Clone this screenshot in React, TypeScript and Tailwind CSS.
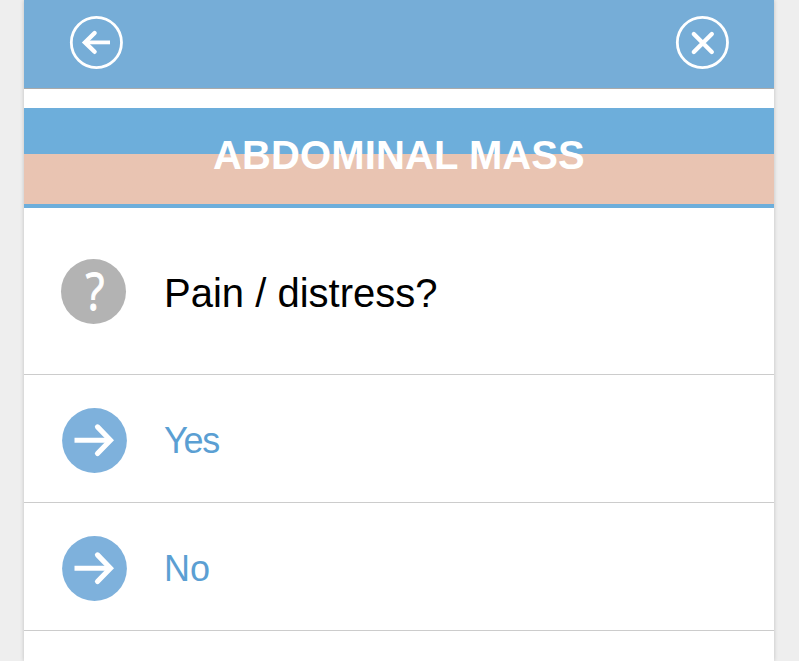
import type { ReactNode } from "react";

const sans = "font-['Liberation_Sans',Arial,sans-serif]";

function BackIcon() {
  return (
    <svg width="54" height="54" viewBox="0 0 54 54" fill="none" stroke="white">
      <circle cx="27.4" cy="27.5" r="25.1" strokeWidth="2.8" />
      <path d="M41 27.4H18" strokeWidth="3.8" />
      <path d="M25.6 18L16 27.4L25.6 36.8" strokeWidth="4.4" strokeLinecap="round" />
    </svg>
  );
}

function CloseIcon() {
  return (
    <svg width="54" height="54" viewBox="0 0 54 54" fill="none" stroke="white">
      <circle cx="27.4" cy="27.5" r="25.1" strokeWidth="2.8" />
      <path d="M18.8 19L36.8 37M36.8 19L18.8 37" strokeWidth="4.3" strokeLinecap="round" />
    </svg>
  );
}

function QuestionIcon() {
  return (
    <span className="flex size-[65px] items-center justify-center rounded-full bg-[#b3b3b3]">
      <span className="mb-[2px] ml-[4px] scale-x-[0.86] font-['Open_Sans',sans-serif] text-[51px] leading-[62px] text-white [-webkit-text-stroke:1px_white]">
        ?
      </span>
    </span>
  );
}

function ArrowIcon() {
  return (
    <svg width="65" height="65" viewBox="0 0 65 65" fill="none" stroke="white">
      <circle cx="32.5" cy="32.5" r="32.4" fill="#7eb1dc" stroke="none" />
      <path d="M12.5 32.2H47" strokeWidth="5" />
      <path d="M35.5 18.9L48.4 32.2L35.5 45.5" strokeWidth="5.2" strokeLinecap="round" />
    </svg>
  );
}

function Answer({ children }: { children: ReactNode }) {
  return (
    <button className="flex h-32 w-full items-center border-b border-[#cccccc] pl-[38px] pt-[3px] text-left text-[36px] leading-none text-[#5b9fd3]">
      <ArrowIcon />
      <span className="ml-[37px] mt-[1px]">{children}</span>
    </button>
  );
}

export default function App() {
  return (
    <div className={`h-[661px] overflow-hidden bg-[#eeeeee] pl-6 pr-[25px] ${sans}`}>
      <main className="h-full bg-white shadow-[0_0_4px_rgba(0,0,0,0.2)]">
        <header className="flex h-[89px] items-start justify-between border-b border-[#aaaaaa] bg-[#76add7] pl-[45px] pr-[45px] pt-[15px]">
          <button aria-label="Back"><BackIcon /></button>
          <button aria-label="Close"><CloseIcon /></button>
        </header>
        <div className="mt-[19px] h-[100px] border-b-4 border-[#6daedb] bg-linear-to-b from-[#6daedb] from-[46px] to-[#e9c4b2] to-[46px] text-center">
          <h1 className="pt-[24px] text-[40px] font-bold leading-[46px] tracking-[0.1px] text-white">ABDOMINAL MASS</h1>
        </div>
        <section className="flex h-[167px] items-center border-b border-[#cccccc] pl-[37px]">
          <QuestionIcon />
          <h2 className="ml-[38px] mt-[4px] text-[40px] leading-none text-black">Pain / distress?</h2>
        </section>
        <Answer><span className="tracking-[-1.2px]">Yes</span></Answer>
        <Answer>No</Answer>
      </main>
    </div>
  );
}
